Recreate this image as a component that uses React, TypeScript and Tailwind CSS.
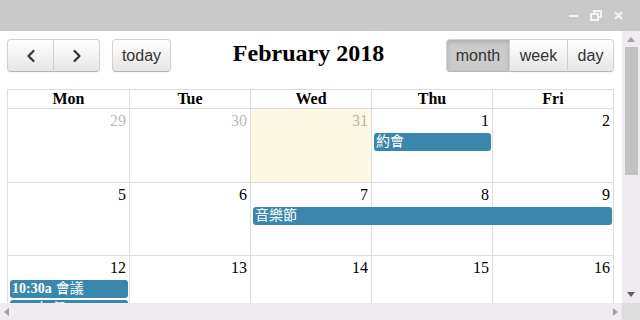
import { ChevronLeft, ChevronRight } from "lucide-react";

const serif = "font-['Liberation_Serif','Noto_Sans_CJK_TC',serif]";
const sans = "font-['Liberation_Sans',Arial,sans-serif]";

const days = ["Mon", "Tue", "Wed", "Thu", "Fri"];

type CalEvent = { title: string; time?: string; start: number; span: number; row: number };

type Week = { dates: number[]; other: number[]; today?: number; height: string; events: CalEvent[] };

const weeks: Week[] = [
    {
        dates: [29, 30, 31, 1, 2],
        other: [0, 1, 2],
        today: 2,
        height: "h-[74px]",
        events: [{ title: "約會", start: 4, span: 1, row: 2 }],
    },
    {
        dates: [5, 6, 7, 8, 9],
        other: [],
        height: "h-[73px]",
        events: [{ title: "音樂節", start: 3, span: 3, row: 2 }],
    },
    {
        dates: [12, 13, 14, 15, 16],
        other: [],
        height: "h-[74px]",
        events: [
            { title: "會議", time: "10:30a", start: 1, span: 1, row: 2 },
            { title: "午餐", time: "12p", start: 1, span: 1, row: 3 },
        ],
    },
];

const colStart = ["col-start-1", "col-start-2", "col-start-3", "col-start-4", "col-start-5"];
const colSpan = ["col-span-1", "col-span-2", "col-span-3", "col-span-4", "col-span-5"];
const rowStart = ["row-start-1", "row-start-2", "row-start-3", "row-start-4"];

function Button({ children, active, className }: { children: React.ReactNode; active?: boolean; className?: string }) {
    return (
        <button
            className={`h-[33px] flex items-center justify-center border border-[#d2d2d2] border-b-[#b8b8b8] text-[16px] text-[#333] ${sans} ${active
                ? "bg-[#cbcbcb] shadow-[inset_0_2px_4px_rgba(0,0,0,0.15)]"
                : "bg-gradient-to-b from-white to-[#e6e6e6] shadow-[inset_0_1px_0_rgba(255,255,255,0.2),0_1px_2px_rgba(0,0,0,0.05)]"
                } ${className ?? ""}`}
        >
            {children}
        </button>
    );
}

function Toolbar() {
    return (
        <div className="flex items-start h-[33px]">
            <div className="flex">
                <Button className="w-[47px] rounded-l-[4px]">
                    <ChevronLeft size={20} strokeWidth={2.6} />
                </Button>
                <Button className="w-[46px] rounded-r-[4px] border-l-0">
                    <ChevronRight size={20} strokeWidth={2.6} />
                </Button>
            </div>
            <Button className="ml-[12px] w-[59px] rounded-[4px]">today</Button>
            <div className="flex-1 text-center">
                <h2 className={`${serif} text-[24px] font-bold leading-[28px] text-black`}>February 2018</h2>
            </div>
            <div className="flex">
                <Button active className="w-[64px] rounded-l-[4px]">month</Button>
                <Button className="w-[58px] border-l-0">week</Button>
                <Button className="w-[46px] rounded-r-[4px] border-l-0">day</Button>
            </div>
        </div>
    );
}

function EventBar({ ev }: { ev: CalEvent }) {
    return (
        <div
            className={`${colStart[ev.start - 1]} ${colSpan[ev.span - 1]} ${rowStart[ev.row - 1]} mt-[2px] ml-[2px] mr-[2px] h-[18px] rounded-[3px] bg-[#3a87ad] pl-[2px] text-white text-[14px] leading-[18px] whitespace-nowrap overflow-hidden ${serif}`}
        >
            {ev.time ? <span className="font-bold mr-[4px]">{ev.time}</span> : null}
            {ev.title}
        </div>
    );
}

function Calendar() {
    return (
        <div className={`mt-[17px] border-l border-t border-[#ddd] ${serif}`}>
            <div className="grid grid-cols-[122px_repeat(4,121px)] h-[19px]">
                {days.map((d) => (
                    <div key={d} className="border-r border-b border-[#ddd] text-center text-[16px] font-bold leading-[18px] text-black">
                        {d}
                    </div>
                ))}
            </div>
            {weeks.map((w, wi) => (
                <div key={wi} className={`grid grid-cols-[122px_repeat(4,121px)] grid-rows-[auto_auto_auto_1fr] ${w.height}`}>
                    {w.dates.map((d, i) => (
                        <div
                            key={`bg-${d}`}
                            className={`${colStart[i]} row-span-full border-r border-b border-[#ddd] ${w.today === i ? "bg-[#fcf8e3]" : "bg-white"}`}
                        />
                    ))}
                    {w.dates.map((d, i) => (
                        <div
                            key={`n-${d}`}
                            className={`${colStart[i]} row-start-1 pr-[4px] pt-[2px] text-right text-[16px] leading-[20px] ${w.other.includes(i) ? "text-black/30" : "text-black"}`}
                        >
                            {d}
                        </div>
                    ))}
                    {w.events.map((ev) => (
                        <EventBar key={ev.title} ev={ev} />
                    ))}
                </div>
            ))}
        </div>
    );
}

function Triangle({ dir, color }: { dir: "up" | "down" | "left" | "right"; color: string }) {
    const pts = {
        up: "0,5 4,0 8,5",
        down: "0,0 8,0 4,5",
        left: "5,0 5,8 0,4",
        right: "0,0 5,4 0,8",
    }[dir];
    const vertical = dir === "up" || dir === "down";
    return (
        <svg width={vertical ? 8 : 5} height={vertical ? 5 : 8} viewBox={vertical ? "0 0 8 5" : "0 0 5 8"}>
            <polygon points={pts} fill={color} />
        </svg>
    );
}

export default function App() {
    return (
        <div className="w-[640px] h-[320px] flex flex-col overflow-hidden bg-white">
            <div className="h-[31px] shrink-0 bg-[#c9c9c9] flex items-center justify-end gap-[12px] pr-[17px]">
                <div className="w-[9px] h-[2px] bg-[#f4f4f4] mt-[1px]" />
                <svg width="12" height="11" viewBox="0 0 12 11">
                    <rect x="4" y="1" width="7" height="6" fill="none" stroke="#f4f4f4" strokeWidth="2" />
                    <rect x="1" y="4" width="7" height="6" fill="#c9c9c9" stroke="#f4f4f4" strokeWidth="2" />
                </svg>
                <svg width="9" height="9" viewBox="0 0 9 9">
                    <path d="M1 1 L8 8 M8 1 L1 8" stroke="#f4f4f4" strokeWidth="2" />
                </svg>
            </div>
            <div className="flex flex-1 min-h-0">
                <div className="flex-1 overflow-hidden pl-[7px] pr-[8px] pt-[8px]">
                    <Toolbar />
                    <Calendar />
                </div>
                <div className="w-[18px] shrink-0 bg-[#f0ebf1] flex flex-col items-center">
                    <div className="h-[16px] flex items-center justify-center">
                        <Triangle dir="up" color="#a3a3a3" />
                    </div>
                    <div className="w-[13px] h-[128px] bg-[#c2c2c2]" />
                    <div className="mt-auto h-[17px] flex items-center justify-center">
                        <Triangle dir="down" color="#606060" />
                    </div>
                </div>
            </div>
            <div className="h-[17px] shrink-0 flex">
                <div className="flex-1 bg-[#f0ebf1] flex items-center justify-between px-[4px]">
                    <Triangle dir="left" color="#a3a3a3" />
                    <Triangle dir="right" color="#a3a3a3" />
                </div>
                <div className="w-[18px] bg-[#dcdcdc]" />
            </div>
        </div>
    );
}
